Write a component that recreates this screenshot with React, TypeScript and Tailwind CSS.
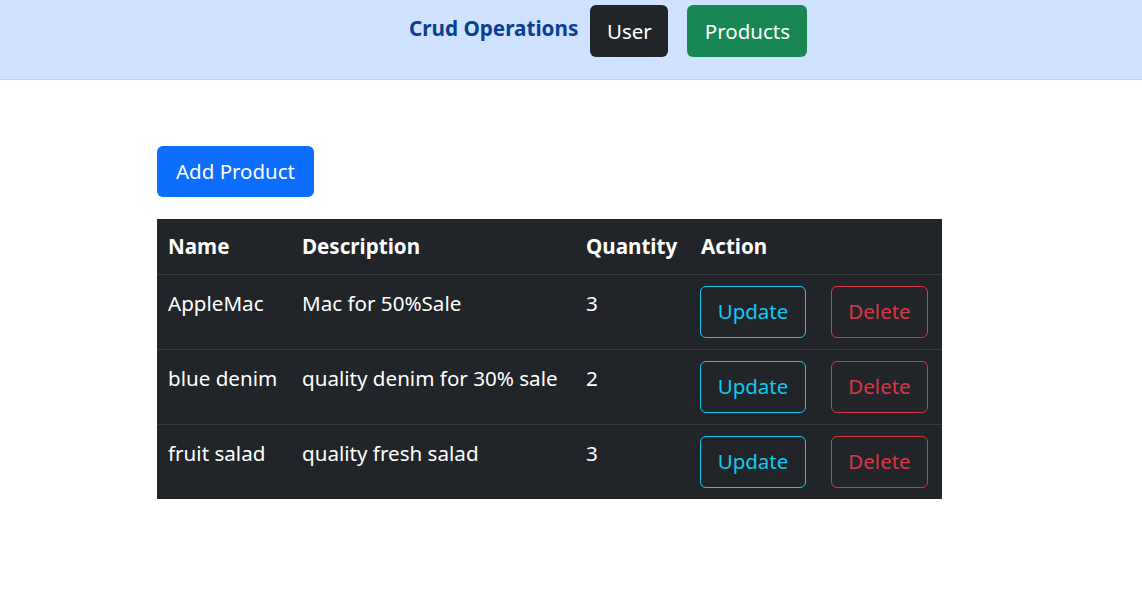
import React from 'react';

interface Product {
  name: string;
  description: string;
  quantity: number;
}

const products: Product[] = [
  { name: 'AppleMac', description: 'Mac for 50%Sale', quantity: 3 },
  { name: 'blue denim', description: 'quality denim for 30% sale', quantity: 2 },
  { name: 'fruit salad', description: 'quality fresh salad', quantity: 3 },
];

const App: React.FC = () => {
  return (
    <div className="min-h-[596px] bg-white text-[#212529]" style={{ fontFamily: '"Noto Sans", "Open Sans", sans-serif' }}>
      {/* Navbar */}
      <nav className="h-[80px] bg-[#cfe2ff] border-b border-[#b6d4fe] flex items-start pl-[409px]">
        <span className="mt-[13px] text-[20.7px] font-bold text-[#0b3d91] leading-[30px]">Crud Operations</span>
        <button className="ml-[12px] mt-[5px] h-[52px] w-[78px] rounded-[6px] bg-[#212529] text-white text-[20.5px]">User</button>
        <button className="ml-[19px] mt-[5px] h-[52px] w-[120px] rounded-[6px] bg-[#198754] text-white text-[20.5px]">Products</button>
      </nav>

      <div className="pl-[157px] pt-[66px]">
        <button className="h-[51px] w-[157px] rounded-[6px] bg-[#0d6efd] text-white text-[20.5px]">Add Product</button>

        <table className="mt-[22px] w-[785px] bg-[#212529] text-white text-[20.6px] border-collapse">
          <thead>
            <tr className="h-[55px] border-b border-[#373b3e]">
              <th className="w-[134px] pl-[11px] pt-[1px] text-left font-bold">Name</th>
              <th className="w-[284px] pl-[11px] pt-[1px] text-left font-bold">Description</th>
              <th className="w-[115px] pl-[11px] pt-[1px] text-left font-bold">Quantity</th>
              <th className="pl-[11px] pt-[1px] text-left font-bold">Action</th>
            </tr>
          </thead>
          <tbody>
            {products.map((p, i) => (
              <tr key={i} className={`h-[75px] align-top ${i < products.length - 1 ? 'border-b border-[#373b3e]' : ''}`}>
                <td className="pl-[11px] pt-[13px] whitespace-nowrap">{p.name}</td>
                <td className="pl-[11px] pt-[13px] whitespace-nowrap">{p.description}</td>
                <td className="pl-[11px] pt-[13px]">{p.quantity}</td>
                <td className="pl-[10px] pt-[11px]">
                  <div className="flex gap-[25px]">
                    <button className="h-[52px] w-[106px] rounded-[6px] border border-[#0dcaf0] text-[#0dcaf0] text-[20.5px]">Update</button>
                    <button className="h-[52px] w-[97px] rounded-[6px] border border-[#dc3545] text-[#dc3545] text-[20.5px]">Delete</button>
                  </div>
                </td>
              </tr>
            ))}
          </tbody>
        </table>
      </div>
    </div>
  );
};

export default App;
